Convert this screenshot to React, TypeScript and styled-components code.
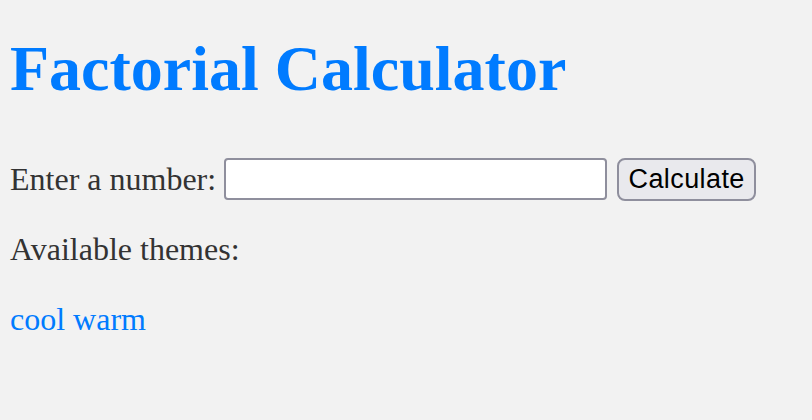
import React from 'react'
import styled, { createGlobalStyle } from 'styled-components'

const GlobalStyle = createGlobalStyle`
  html, body {
    margin: 0;
    padding: 0;
    background: #f2f2f2;
  }
  body {
    font-family: "Liberation Serif", "Times New Roman", serif;
    font-size: 32px;
    color: #333333;
  }
`

const Page = styled.div`
  padding: 10px;
  min-height: 400px;
`

const Title = styled.h1`
  margin: 22px 0 0;
  font-size: 64px;
  font-weight: 700;
  color: #007bff;
`

const Form = styled.form`
  display: flex;
  align-items: center;
  margin-top: 52px;
  height: 42px;
`

const Label = styled.label`
  margin-right: 8px;
`

const NumberInput = styled.input`
  box-sizing: border-box;
  width: 383px;
  height: 42px;
  border: 2px solid #8f8f9d;
  border-radius: 4px;
  background: #ffffff;
  font-size: 26px;
  padding: 2px 4px;
`

const Button = styled.button`
  box-sizing: border-box;
  margin-left: 10px;
  width: 139px;
  height: 43px;
  border: 2px solid #8f8f9d;
  border-radius: 8px;
  background: #e9e9ed;
  color: #000000;
  font-family: "Liberation Sans", Arial, sans-serif;
  font-size: 27px;
  letter-spacing: 0.4px;
  padding: 0;
`

const Paragraph = styled.p<{ gap: number }>`
  margin: ${(props) => props.gap}px 0 0;
`

const ThemeLink = styled.a`
  color: #007bff;
  text-decoration: none;
`

const themes = ['cool', 'warm']

const App = () => {
  return (
    <>
      <GlobalStyle />
      <Page>
        <Title>Factorial Calculator</Title>
        <Form onSubmit={(e) => e.preventDefault()}>
          <Label htmlFor="num">Enter a number:</Label>
          <NumberInput id="num" type="text" />
          <Button type="submit">Calculate</Button>
        </Form>
        <Paragraph gap={31}>Available themes:</Paragraph>
        <Paragraph gap={33}>
          {themes.map((t, i) => (
            <React.Fragment key={t}>
              {i > 0 && ' '}
              <ThemeLink href="#">{t}</ThemeLink>
            </React.Fragment>
          ))}
        </Paragraph>
      </Page>
    </>
  )
}

export default App
